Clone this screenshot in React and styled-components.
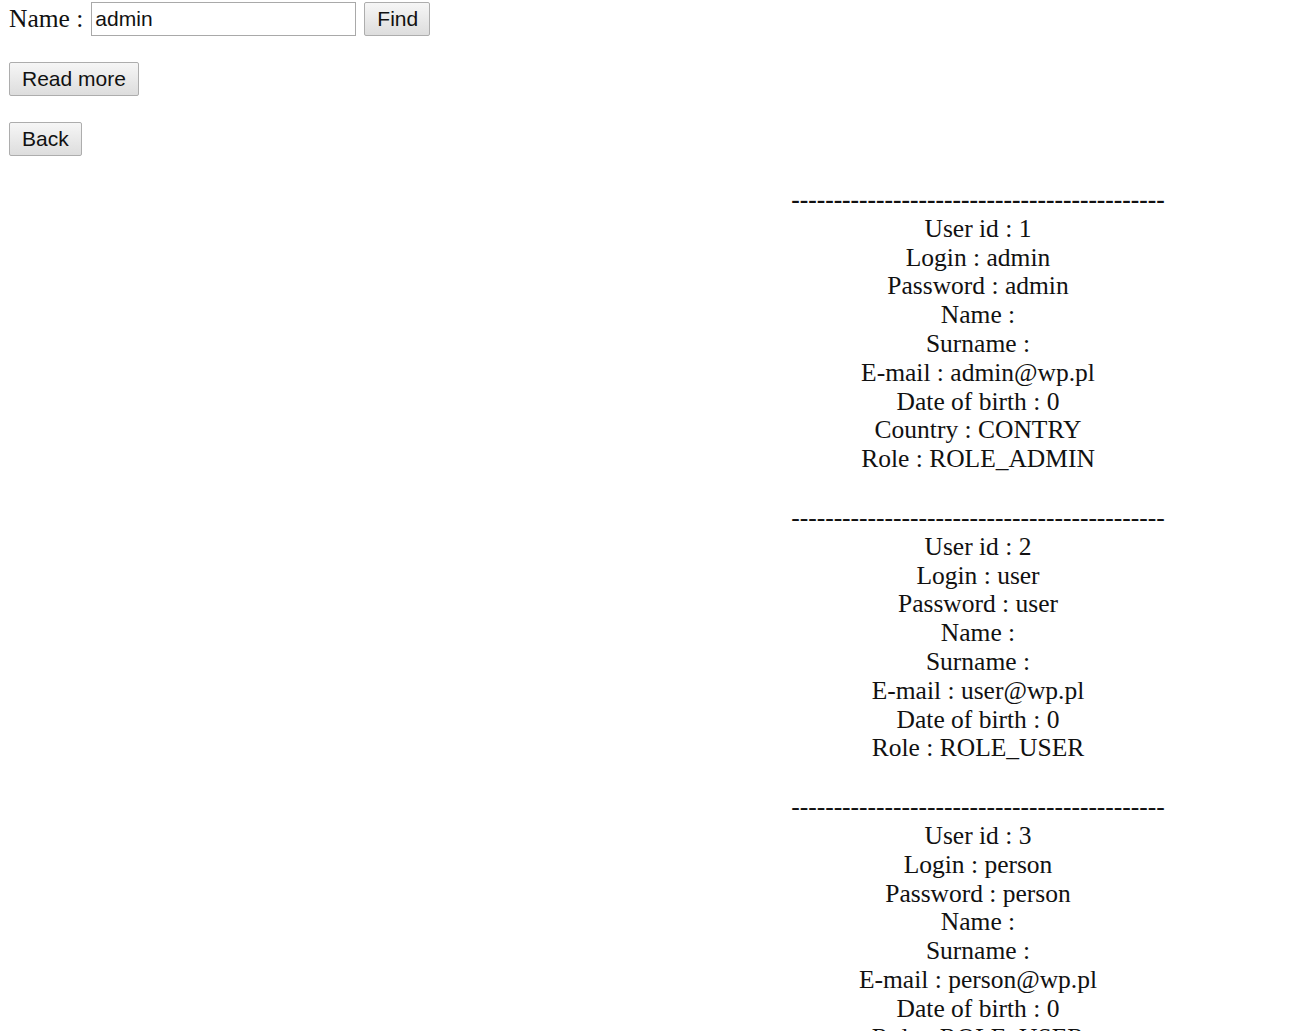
import React from 'react';
import styled, { createGlobalStyle } from 'styled-components';

const GlobalStyle = createGlobalStyle`
  body {
    margin: 0;
    background: #fff;
    color: #111;
    font-family: "Liberation Serif", "Times New Roman", serif;
  }
`;

const Page = styled.div`
  padding: 2px 0 0 9px;
  font-size: 25.5px;
`;

const SearchRow = styled.form`
  display: flex;
  align-items: center;
  height: 34px;
`;

const Label = styled.span`
  font-size: 25.5px;
`;

const NameInput = styled.input`
  box-sizing: border-box;
  width: 265px;
  height: 34px;
  margin-left: 8px;
  padding: 0 3px;
  border: 1px solid #a9a9a9;
  font-family: "Liberation Sans", Arial, sans-serif;
  font-size: 21px;
  color: #111;
  outline: none;
`;

const Button = styled.button`
  box-sizing: border-box;
  height: 34px;
  margin-left: ${({ $inline }) => ($inline ? '8px' : '0')};
  padding: 0 12px;
  border: 1px solid #adadad;
  border-radius: 2px;
  background: linear-gradient(#f6f6f6, #dddddd);
  font-family: "Liberation Sans", Arial, sans-serif;
  font-size: 21px;
  color: #111;
  cursor: pointer;
`;

const ButtonRow = styled.div`
  margin-top: 26px;
  display: flex;
`;

const UserList = styled.div`
  margin: 30px 0 0 647px;
  line-height: 28.8px;
  text-align: center;
`;

const UserCard = styled.div`
  margin-bottom: 30px;
`;

const Divider = styled.div`
  font-weight: ${({ $bold }) => ($bold ? 700 : 400)};
`;

const Line = styled.div``;

const users = [
  {
    id: 1, login: 'admin', password: 'admin', email: 'admin@wp.pl', dob: 0,
    country: 'CONTRY', role: 'ROLE_ADMIN',
  },
  { id: 2, login: 'user', password: 'user', email: 'user@wp.pl', dob: 0, role: 'ROLE_USER' },
  { id: 3, login: 'person', password: 'person', email: 'person@wp.pl', dob: 0, role: 'ROLE_USER' },
];

const dashes = '-'.repeat(44);

const App = () => {
  return (
    <Page>
      <GlobalStyle />
      <SearchRow onSubmit={(e) => e.preventDefault()}>
        <Label>Name :</Label>
        <NameInput defaultValue="admin" />
        <Button $inline type="submit" style={{ width: 66 }}>Find</Button>
      </SearchRow>
      <ButtonRow>
        <Button type="button">Read more</Button>
      </ButtonRow>
      <ButtonRow>
        <Button type="button">Back</Button>
      </ButtonRow>
      <UserList>
        {users.map((u, i) => (
          <UserCard key={u.id}>
            <Divider $bold={i === 0}>{dashes}</Divider>
            <Line>User id : {u.id}</Line>
            <Line>Login : {u.login}</Line>
            <Line>Password : {u.password}</Line>
            <Line>Name : </Line>
            <Line>Surname : </Line>
            <Line>E-mail : {u.email}</Line>
            <Line>Date of birth : {u.dob}</Line>
            {u.country && <Line>Country : {u.country}</Line>}
            <Line>Role : {u.role}</Line>
          </UserCard>
        ))}
      </UserList>
    </Page>
  );
};

export default App;
